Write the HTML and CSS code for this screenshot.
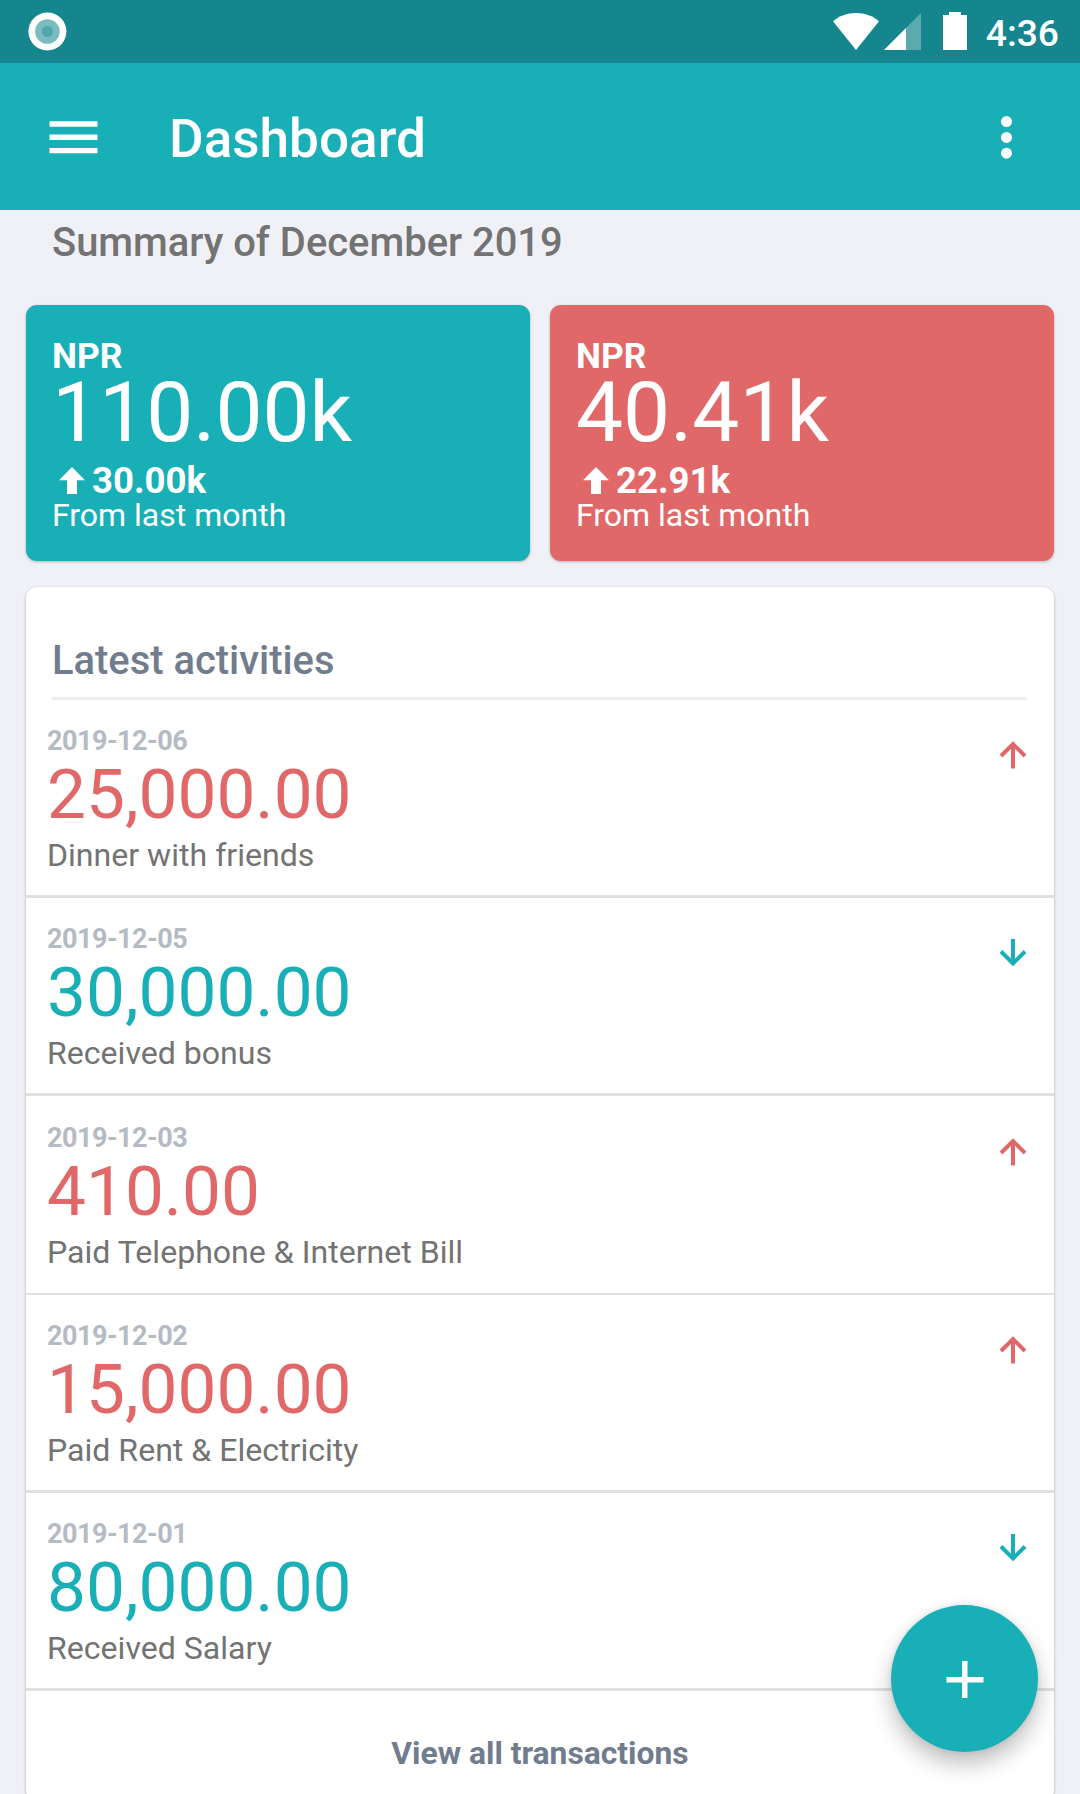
FILE: index.html
```
<!DOCTYPE html>
<html lang="en">
<head>
    <meta charset="UTF-8">
    <meta name="viewport" content="width=device-width, initial-scale=1.0">
    <title>Dashboard</title>
    <link rel="stylesheet" href="styles.css">
</head>
<body>
    <div class="statusbar">
        <svg class="notification" width="40" height="40" viewBox="0 0 40 40">
            <circle cx="20.4" cy="19.5" r="19" fill="#fff"/>
            <circle cx="20.4" cy="19.5" r="12.3" fill="#7abcc0"/>
            <circle cx="20.4" cy="19.5" r="5.6" fill="#53a6ab"/>
        </svg>
        <div class="status-icons">
            <svg class="wifi" width="48" height="40" viewBox="0 0 48 40" fill="#fff">
                <path d="M24 38 L1 9.3 C7 4 15 1 24 1 C33 1 41 4 47 9.3 Z"/>
            </svg>
            <svg class="signal" width="38" height="40" viewBox="0 0 38 40" fill="#fff">
                <path d="M37 1 V38 H0 Z" fill-opacity="0.3"/>
                <path d="M22 16 V38 H0 Z"/>
            </svg>
            <svg class="battery" width="24" height="40" viewBox="0 0 24 40" fill="#fff">
                <path d="M6 0 H18 V3 H24 V38 H0 V3 H6 Z"/>
            </svg>
            <span class="clock">4:36</span>
        </div>
    </div>

    <div class="navbar">
        <svg class="menu" width="49" height="34" viewBox="0 0 49 34" fill="#fff">
            <path d="M0.5 1.3 H48.5 V6.7 H0.5 Z M0.5 14.6 H48.5 V20 H0.5 Z M0.5 27.9 H48.5 V33.3 H0.5 Z"/>
        </svg>
        <h1>Dashboard</h1>
        <svg class="more" width="12" height="44" viewBox="0 0 12 44" fill="#fff">
            <circle cx="6.5" cy="6.6" r="5.5"/>
            <circle cx="6.5" cy="22.4" r="5.5"/>
            <circle cx="6.5" cy="38.2" r="5.5"/>
        </svg>
    </div>

    <div class="container">
        <h2 class="summary-title">Summary of December 2019</h2>

        <div class="stats">
            <div class="stat income">
                <div class="currency">NPR</div>
                <div class="total">110.00k</div>
                <div class="change">
                    <svg width="26" height="28" viewBox="0 0 26 28" fill="#fff">
                        <path d="M13 0 L26 13.3 H18 V27 H8 V13.3 H0 Z"/>
                    </svg>
                    <span>30.00k</span>
                </div>
                <div class="period">From last month</div>
            </div>
            <div class="stat expense">
                <div class="currency">NPR</div>
                <div class="total">40.41k</div>
                <div class="change">
                    <svg width="26" height="28" viewBox="0 0 26 28" fill="#fff">
                        <path d="M13 0 L26 13.3 H18 V27 H8 V13.3 H0 Z"/>
                    </svg>
                    <span>22.91k</span>
                </div>
                <div class="period">From last month</div>
            </div>
        </div>

        <div class="activities">
            <h3>Latest activities</h3>
            <div class="activity expense">
                <div>
                    <div class="date">2019-12-06</div>
                    <div class="amount">25,000.00</div>
                    <div class="note">Dinner with friends</div>
                </div>
                <svg class="arrow" width="28" height="28" viewBox="0 0 28 28">
                    <path d="M14 27.5 V3 M2 15 L14 3 L26 15"/>
                </svg>
            </div>
            <div class="activity income">
                <div>
                    <div class="date">2019-12-05</div>
                    <div class="amount">30,000.00</div>
                    <div class="note">Received bonus</div>
                </div>
                <svg class="arrow" width="28" height="28" viewBox="0 0 28 28">
                    <path d="M14 0 V24 M2 12.5 L14 24.5 L26 12.5"/>
                </svg>
            </div>
            <div class="activity expense">
                <div>
                    <div class="date">2019-12-03</div>
                    <div class="amount">410.00</div>
                    <div class="note">Paid Telephone &amp; Internet Bill</div>
                </div>
                <svg class="arrow" width="28" height="28" viewBox="0 0 28 28">
                    <path d="M14 27.5 V3 M2 15 L14 3 L26 15"/>
                </svg>
            </div>
            <div class="activity expense">
                <div>
                    <div class="date">2019-12-02</div>
                    <div class="amount">15,000.00</div>
                    <div class="note">Paid Rent &amp; Electricity</div>
                </div>
                <svg class="arrow" width="28" height="28" viewBox="0 0 28 28">
                    <path d="M14 27.5 V3 M2 15 L14 3 L26 15"/>
                </svg>
            </div>
            <div class="activity income">
                <div>
                    <div class="date">2019-12-01</div>
                    <div class="amount">80,000.00</div>
                    <div class="note">Received Salary</div>
                </div>
                <svg class="arrow" width="28" height="28" viewBox="0 0 28 28">
                    <path d="M14 0 V24 M2 12.5 L14 24.5 L26 12.5"/>
                </svg>
            </div>
            <a href="#" class="view-all">View all transactions</a>
        </div>
    </div>

    <button class="add" aria-label="Add transaction">
        <svg width="38" height="38" viewBox="0 0 38 38" fill="#fff">
            <path d="M16 1 H21.5 V17 H37.5 V22.5 H21.5 V38 H16 V22.5 H0.5 V17 H16 Z"/>
        </svg>
    </button>
</body>
</html>
```
FILE: styles.css
```
body {
    font-family: Roboto, sans-serif;
    margin: 0;
    height: 1794px;
    overflow: hidden;
    background-color: #f0f1f6;
    color: #737373;
}
h1, h2, h3 {
    margin: 0;
    font-weight: 500;
}
svg {
    display: block;
    flex: none;
}
.statusbar {
    display: flex;
    justify-content: space-between;
    box-sizing: border-box;
    height: 63px;
    padding: 12px 21px 0 27px;
    background-color: #15868d;
}
.status-icons {
    display: flex;
}
.signal {
    margin-left: 4px;
}
.battery {
    margin-left: 21px;
}
.clock {
    margin-left: 19px;
    font-size: 37.2px;
    font-weight: 500;
    line-height: 43px;
    color: #fff;
}
.navbar {
    display: flex;
    align-items: center;
    box-sizing: border-box;
    height: 147px;
    padding: 0 68px 0 49px;
    background-color: #19afb7;
    color: #fff;
}
.navbar h1 {
    flex: 1;
    margin-left: 71px;
    padding-top: 5px;
    font-size: 53.1px;
}
.container {
    padding: 0 26px;
}
.summary-title {
    padding: 9px 26px 0;
    height: 86px;
    font-size: 39.9px;
    line-height: 47px;
}
.stats {
    display: flex;
    gap: 20px;
    margin-bottom: 26px;
}
.stat {
    flex: 1;
    box-sizing: border-box;
    height: 256px;
    padding: 31px 26px;
    border-radius: 11px;
    box-shadow: 0 1px 3px rgba(0, 0, 0, 0.25);
    color: #fff;
}
.stat.income {
    background-color: #19afb7;
}
.stat.expense {
    background-color: #e16868;
}
.currency {
    font-size: 35.4px;
    font-weight: bold;
    line-height: 40px;
}
.total {
    font-size: 83.8px;
    line-height: 72px;
}
.change {
    display: flex;
    align-items: center;
    margin-top: 14px;
    padding-left: 7px;
    font-size: 36.6px;
    font-weight: bold;
    line-height: 38px;
}
.change span {
    margin-left: 7px;
}
.period {
    font-size: 32px;
    line-height: 30px;
}
.activities {
    height: 1214px;
    border-radius: 11px;
    background-color: #fff;
    box-shadow: 0 1px 3px rgba(0, 0, 0, 0.3);
}
.activities h3 {
    box-sizing: border-box;
    height: 113px;
    margin: 0 27px 0 26px;
    padding-top: 50px;
    border-bottom: 3px solid #eee;
    font-size: 39.9px;
    line-height: 47px;
    color: #717c8d;
}
.activity {
    display: flex;
    justify-content: space-between;
    box-sizing: border-box;
    height: 198px;
    padding: 25px 27px 0 21px;
    border-bottom: 3px solid #e0e0e0;
}
.activity:nth-of-type(3) {
    height: 199px;
    padding-top: 26px;
    border-bottom-width: 2px;
}
.date {
    font-size: 27px;
    font-weight: bold;
    letter-spacing: -0.5px;
    line-height: 33px;
    color: #b5bbc3;
}
.amount {
    font-size: 69.3px;
    line-height: 74px;
}
.activity.income .amount {
    color: #19afb7;
}
.activity.expense .amount {
    color: #e16868;
}
.note {
    font-size: 32.1px;
    line-height: 46px;
}
.arrow {
    margin-top: 16px;
    fill: none;
    stroke-width: 4;
}
.income .arrow {
    stroke: #19afb7;
}
.expense .arrow {
    stroke: #e16868;
}
.view-all {
    display: block;
    padding-top: 42px;
    text-align: center;
    text-decoration: none;
    font-size: 31.8px;
    font-weight: bold;
    line-height: 40px;
    color: #717c8d;
}
.add {
    position: fixed;
    right: 42px;
    bottom: 42px;
    display: flex;
    align-items: center;
    justify-content: center;
    width: 147px;
    height: 147px;
    padding: 0;
    border: none;
    border-radius: 50%;
    background-color: #19afb7;
    box-shadow: 0 12px 22px rgba(0, 0, 0, 0.25), 0 0 6px rgba(0, 0, 0, 0.1);
    cursor: pointer;
}
```
